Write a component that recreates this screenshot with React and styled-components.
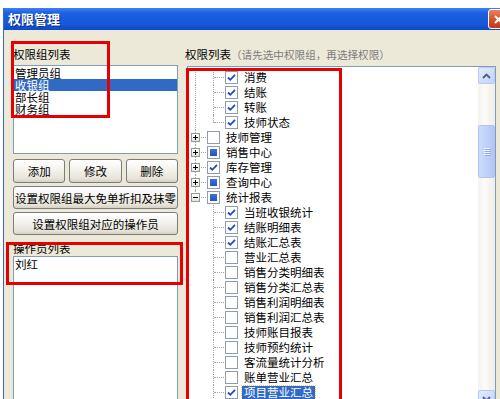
import styled, { createGlobalStyle, css } from 'styled-components'

const GlobalStyle = createGlobalStyle`
  html, body {
    margin: 0;
    padding: 0;
    background: #fff;
  }
  body {
    font-family: "Noto Sans CJK SC", "Noto Sans", sans-serif;
  }
`;

const Page = styled.div`
  position: relative;
  width: 500px;
  height: 399px;
  overflow: hidden;
  padding: 8px 0 0 3px;
  box-sizing: border-box;
  background: #fff;
`;

const Window = styled.div`
  width: 497px;
  height: 420px;
  box-sizing: border-box;
  background: #ece9d8;
  border-left: 1px solid #3463d6;
  display: flex;
  flex-direction: column;
`;

const TitleBar = styled.div`
  height: 22px;
  flex: 0 0 22px;
  display: flex;
  align-items: center;
  justify-content: space-between;
  padding-left: 4px;
  background: linear-gradient(#3b82f4 0%, #1e60e2 22%, #1657d8 75%, #0d49c6 100%);
`;

const Title = styled.span`
  color: #fff;
  font-size: 13px;
  font-weight: bold;
  line-height: 16px;
  text-shadow: 1px 1px 0 #0b2a86;
`;

const CloseButton = styled.span`
  flex: 0 0 21px;
  width: 21px;
  height: 20px;
  margin-right: -9px;
  box-sizing: border-box;
  border: 1px solid #fff;
  border-radius: 3px;
  background: linear-gradient(#e8825f, #d4502b 55%, #c03a1a);
  display: flex;
  align-items: center;
  justify-content: center;
`;

const Body = styled.div`
  display: flex;
  gap: 9px;
  padding: 18px 0 0 9px;
`;

const LeftCol = styled.div`
  width: 165px;
  display: flex;
  flex-direction: column;
`;

const RightCol = styled.div`
  width: 309px;
  display: flex;
  flex-direction: column;
`;

const Label = styled.div`
  font-size: 11.5px;
  line-height: 13px;
  height: 13px;
  color: #000;
  white-space: nowrap;
  margin-top: ${p => p.$top || 0}px;
  margin-left: ${p => p.$shift || 0}px;
`;

const Hint = styled.span`
  font-size: 10.6px;
  color: #7c7c7c;
`;

const ListBox = styled.div`
  box-sizing: border-box;
  height: ${p => p.$height}px;
  margin-top: ${p => p.$top || 0}px;
  background: #fff;
  border: 1px solid #7f9db9;
  padding-top: 1px;
`;

const ListItem = styled.div`
  font-size: 11.5px;
  line-height: 12px;
  height: 12px;
  padding-left: 1px;
  color: ${p => (p.$selected ? '#fff' : '#000')};
  background: ${p => (p.$selected ? '#316ac5' : 'transparent')};
  white-space: nowrap;
`;

const ButtonRow = styled.div`
  display: flex;
  gap: 4px;
  margin-top: 5px;
`;

const Button = styled.button`
  flex: ${p => (p.$grow ? '1 1 0' : '0 0 auto')};
  height: ${p => p.$height || 23}px;
  margin-top: ${p => p.$top || 0}px;
  padding: 0;
  box-sizing: border-box;
  border: 1px solid #7c7c7c;
  border-radius: 3px;
  background: linear-gradient(#ffffff, #f3f2ed 45%, #e6e3d8 85%, #d6d0c4);
  font-family: "Noto Sans CJK SC", "Noto Sans", sans-serif;
  font-size: 11.5px;
  color: #000;
  white-space: nowrap;
`;

const TreeBox = styled.div`
  display: flex;
  box-sizing: border-box;
  height: 345px;
  margin-top: 5px;
  background: #fff;
  border: 1px solid #7f9db9;
`;

const TreeContent = styled.div`
  flex: 1;
  padding-top: 3px;
`;

const TreeRow = styled.div`
  display: flex;
  align-items: center;
  height: 15px;
`;

const lineColor = '#a3a3a3';

const Guide = styled.span`
  position: relative;
  flex: 0 0 18px;
  height: 15px;
  ${p => p.$line && css`
    &::before {
      content: '';
      position: absolute;
      left: 7px;
      top: 0;
      height: 15px;
      border-left: 1px dotted ${lineColor};
    }
  `}
`;

const Connector = styled.span`
  position: relative;
  flex: 0 0 18px;
  height: 15px;
  &::before {
    content: '';
    position: absolute;
    left: 7px;
    top: 0;
    height: ${p => (p.$last ? 8 : 15)}px;
    border-left: 1px dotted ${lineColor};
  }
  &::after {
    content: '';
    position: absolute;
    left: 8px;
    right: 0;
    top: 7px;
    border-top: 1px dotted ${lineColor};
  }
`;

const Expander = styled.span`
  position: absolute;
  left: 3px;
  top: 3px;
  z-index: 1;
  width: 9px;
  height: 9px;
  box-sizing: border-box;
  border: 1px solid #919b9c;
  background: linear-gradient(#fff, #e6e4dc);
  display: flex;
`;

const CheckBox = styled.span`
  flex: 0 0 13px;
  width: 13px;
  height: 13px;
  margin-left: 1px;
  box-sizing: border-box;
  border: 1px solid #8e9bb0;
  background: #fff;
  display: flex;
  align-items: center;
  justify-content: center;
`;

const PartialMark = styled.span`
  width: 7px;
  height: 7px;
  background: linear-gradient(#3f71dc, #2352c2);
`;

const NodeText = styled.span`
  margin-left: 4px;
  padding: 0 2px;
  font-size: 11.5px;
  line-height: 13px;
  white-space: nowrap;
  color: ${p => (p.$selected ? '#fff' : '#000')};
  background: ${p => (p.$selected ? '#316ac5' : 'transparent')};
  outline: ${p => (p.$selected ? '1px dotted #e8d36a' : 'none')};
`;

const ScrollBar = styled.div`
  flex: 0 0 17px;
  display: flex;
  flex-direction: column;
  background: linear-gradient(90deg, #f4f3ee, #fbfbf8 40%, #efeee7);
`;

const ScrollButton = styled.div`
  height: 17px;
  flex: 0 0 17px;
  box-sizing: border-box;
  border: 1px solid #b7c9f5;
  border-radius: 2px;
  background: linear-gradient(135deg, #e2eafd, #c2d3fb);
  display: flex;
  align-items: center;
  justify-content: center;
  margin-top: ${p => p.$top || 0}px;
`;

const Thumb = styled.div`
  height: 53px;
  flex: 0 0 53px;
  margin-top: 41px;
  box-sizing: border-box;
  border: 1px solid #b0c4f4;
  border-radius: 2px;
  background: linear-gradient(90deg, #cddcfd, #bdd0fa 60%, #b2c6f5);
  display: flex;
  flex-direction: column;
  align-items: center;
  justify-content: center;
  gap: 1px;
`;

const Grip = styled.span`
  width: 6px;
  height: 1px;
  background: #eef3fe;
  box-shadow: 1px 1px 0 #8faae6;
`;

const Annotation = styled.div`
  position: absolute;
  box-sizing: border-box;
  border: 3px solid #e60000;
  pointer-events: none;
`;

const groups = ['管理员组', '收银组', '部长组', '财务组'];

const treeRows = [
  { guides: [true], label: '消费', state: 'checked' },
  { guides: [true], label: '结账', state: 'checked' },
  { guides: [true], label: '转账', state: 'checked' },
  { guides: [true], label: '技师状态', state: 'checked', last: true },
  { guides: [], label: '技师管理', state: 'empty', expander: '+' },
  { guides: [], label: '销售中心', state: 'partial', expander: '+' },
  { guides: [], label: '库存管理', state: 'checked', expander: '+' },
  { guides: [], label: '查询中心', state: 'partial', expander: '+' },
  { guides: [], label: '统计报表', state: 'partial', expander: '-', last: true },
  { guides: [false], label: '当班收银统计', state: 'checked' },
  { guides: [false], label: '结账明细表', state: 'checked' },
  { guides: [false], label: '结账汇总表', state: 'checked' },
  { guides: [false], label: '营业汇总表', state: 'empty' },
  { guides: [false], label: '销售分类明细表', state: 'empty' },
  { guides: [false], label: '销售分类汇总表', state: 'empty' },
  { guides: [false], label: '销售利润明细表', state: 'empty' },
  { guides: [false], label: '销售利润汇总表', state: 'empty' },
  { guides: [false], label: '技师账目报表', state: 'empty' },
  { guides: [false], label: '技师预约统计', state: 'empty' },
  { guides: [false], label: '客流量统计分析', state: 'empty' },
  { guides: [false], label: '账单营业汇总', state: 'empty' },
  { guides: [false], label: '项目营业汇总', state: 'checked', selected: true },
];

function Check({ state }) {
  return (
    <CheckBox>
      {state === 'checked' && (
        <svg width="11" height="11" viewBox="0 0 11 11">
          <path d="M2 5.5 L4.3 7.8 L9 2.8" fill="none" stroke="#2149c0" strokeWidth="1.8" />
        </svg>
      )}
      {state === 'partial' && <PartialMark />}
    </CheckBox>
  );
}

function ExpandBox({ sign }) {
  return (
    <Expander>
      <svg width="7" height="7" viewBox="0 0 7 7">
        <path d="M1 3.5 H6" stroke="#000" strokeWidth="1" />
        {sign === '+' && <path d="M3.5 1 V6" stroke="#000" strokeWidth="1" />}
      </svg>
    </Expander>
  );
}

export default function App() {
  return (
    <Page>
      <GlobalStyle />
      <Window>
        <TitleBar>
          <Title>权限管理</Title>
          <CloseButton>
            <svg width="11" height="11" viewBox="0 0 11 11">
              <path d="M2 2 L9 9 M9 2 L2 9" stroke="#fff" strokeWidth="2" />
            </svg>
          </CloseButton>
        </TitleBar>
        <Body>
          <LeftCol>
            <Label>权限组列表</Label>
            <ListBox $height={89} $top={4}>
              {groups.map((g, i) => (
                <ListItem key={g} $selected={i === 1}>{g}</ListItem>
              ))}
            </ListBox>
            <ButtonRow>
              <Button $grow $height={24}>添加</Button>
              <Button $grow $height={24}>修改</Button>
              <Button $grow $height={24}>删除</Button>
            </ButtonRow>
            <Button $top={3}>设置权限组最大免单折扣及抹零</Button>
            <Button $top={3}>设置权限组对应的操作员</Button>
            <Label $top={7}>操作员列表</Label>
            <ListBox $height={170} $top={1}>
              <ListItem>刘红</ListItem>
            </ListBox>
          </LeftCol>
          <RightCol>
            <Label $shift={-2}>权限列表<Hint>（请先选中权限组，再选择权限）</Hint></Label>
            <TreeBox>
              <TreeContent>
                {treeRows.map(row => (
                  <TreeRow key={row.label}>
                    {row.guides.map((g, i) => <Guide key={i} $line={g} />)}
                    <Connector $last={row.last}>
                      {row.expander && <ExpandBox sign={row.expander} />}
                    </Connector>
                    <Check state={row.state} />
                    <NodeText $selected={row.selected}>{row.label}</NodeText>
                  </TreeRow>
                ))}
              </TreeContent>
              <ScrollBar>
                <ScrollButton>
                  <svg width="9" height="6" viewBox="0 0 9 6">
                    <path d="M1 5 L4.5 1.5 L8 5" fill="none" stroke="#4d6185" strokeWidth="1.8" />
                  </svg>
                </ScrollButton>
                <Thumb>
                  <Grip />
                  <Grip />
                  <Grip />
                  <Grip />
                </Thumb>
                <ScrollButton $top={212}>
                  <svg width="9" height="6" viewBox="0 0 9 6">
                    <path d="M1 1 L4.5 4.5 L8 1" fill="none" stroke="#4d6185" strokeWidth="1.8" />
                  </svg>
                </ScrollButton>
              </ScrollBar>
            </TreeBox>
          </RightCol>
        </Body>
      </Window>
      <Annotation style={{ left: 11, top: 41, width: 99, height: 77 }} />
      <Annotation style={{ left: 6, top: 242, width: 177, height: 43 }} />
      <Annotation style={{ left: 186, top: 68, width: 156, height: 340 }} />
    </Page>
  );
}
